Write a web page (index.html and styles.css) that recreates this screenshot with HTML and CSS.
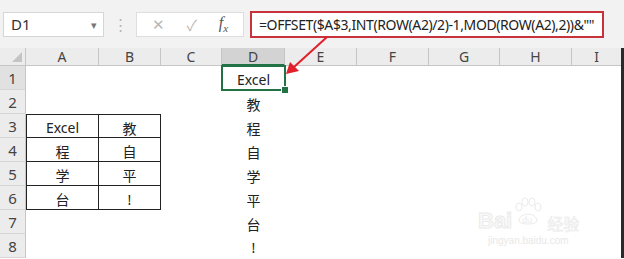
FILE: index.html
```html
<!DOCTYPE html>
<html lang="zh-CN">
<head>
  <meta charset="UTF-8">
  <title>Excel</title>
  <link rel="stylesheet" href="styles.css">
</head>
<body>
  <div class="window">
    <div class="toolbar">
      <div class="namebox">
        <span>D1</span>
        <span class="drop">▾</span>
      </div>
      <div class="dots">⋮</div>
      <div class="controls">
        <span class="ctl cancel">✕</span>
        <span class="ctl ok">✓</span>
        <span class="ctl fx">f<sub>x</sub></span>
      </div>
      <div class="formula">=OFFSET($A$3,INT(ROW(A2)/2)-1,MOD(ROW(A2),2))&amp;""</div>
    </div>

    <div class="sheet">
      <div class="corner"></div>
      <div class="colhead">A</div>
      <div class="colhead">B</div>
      <div class="colhead">C</div>
      <div class="colhead active">D</div>
      <div class="colhead">E</div>
      <div class="colhead">F</div>
      <div class="colhead">G</div>
      <div class="colhead">H</div>
      <div class="colhead last">I</div>

      <div class="rowhead active">1</div>
      <div class="cell"></div><div class="cell"></div><div class="cell"></div>
      <div class="cell selected">Excel</div>
      <div class="cell"></div><div class="cell"></div><div class="cell"></div><div class="cell"></div><div class="cell"></div>

      <div class="rowhead">2</div>
      <div class="cell"></div><div class="cell"></div><div class="cell"></div>
      <div class="cell">教</div>
      <div class="cell"></div><div class="cell"></div><div class="cell"></div><div class="cell"></div><div class="cell"></div>

      <div class="rowhead">3</div>
      <div class="cell tb top left">Excel</div><div class="cell tb top">教</div><div class="cell"></div>
      <div class="cell">程</div>
      <div class="cell"></div><div class="cell"></div><div class="cell"></div><div class="cell"></div><div class="cell"></div>

      <div class="rowhead">4</div>
      <div class="cell tb left">程</div><div class="cell tb">自</div><div class="cell"></div>
      <div class="cell">自</div>
      <div class="cell"></div><div class="cell"></div><div class="cell"></div><div class="cell"></div><div class="cell"></div>

      <div class="rowhead">5</div>
      <div class="cell tb left">学</div><div class="cell tb">平</div><div class="cell"></div>
      <div class="cell">学</div>
      <div class="cell"></div><div class="cell"></div><div class="cell"></div><div class="cell"></div><div class="cell"></div>

      <div class="rowhead">6</div>
      <div class="cell tb left">台</div><div class="cell tb">!</div><div class="cell"></div>
      <div class="cell">平</div>
      <div class="cell"></div><div class="cell"></div><div class="cell"></div><div class="cell"></div><div class="cell"></div>

      <div class="rowhead">7</div>
      <div class="cell"></div><div class="cell"></div><div class="cell"></div>
      <div class="cell">台</div>
      <div class="cell"></div><div class="cell"></div><div class="cell"></div><div class="cell"></div><div class="cell"></div>

      <div class="rowhead">8</div>
      <div class="cell"></div><div class="cell"></div><div class="cell"></div>
      <div class="cell">!</div>
      <div class="cell"></div><div class="cell"></div><div class="cell"></div><div class="cell"></div><div class="cell"></div>
    </div>

    <!-- red callout arrow -->
    <svg class="arrow" width="624" height="259" viewBox="0 0 624 259">
      <line x1="327" y1="37" x2="294" y2="67" stroke="#e0202a" stroke-width="2"/>
      <polygon points="286,74 290,62 299,71" fill="#e0202a"/>
    </svg>

    <div class="watermark">
      <div class="wm-top">
        <span class="wm-bai">Bai</span>
        <span class="wm-paw">
          <svg width="30" height="30" viewBox="0 0 30 30">
            <g fill="none" stroke="#ebebeb" stroke-width="1">
              <ellipse cx="6" cy="10" rx="3" ry="4"/>
              <ellipse cx="12" cy="5" rx="3" ry="4"/>
              <ellipse cx="19" cy="5" rx="3" ry="4"/>
              <ellipse cx="25" cy="10" rx="3" ry="4"/>
              <path d="M6 24 C6 15 24 15 24 24 C24 28 6 28 6 24 Z"/>
            </g>
            <text x="9" y="26" font-size="9" fill="#ebebeb" font-family="Liberation Sans, sans-serif">du</text>
          </svg>
        </span>
        <span class="wm-jy">经验</span>
      </div>
      <div class="wm-url">jingyan.baidu.com</div>
    </div>
  </div>
</body>
</html>
```

FILE: styles.css
```css
* {
  box-sizing: border-box;
}
body {
  margin: 0;
  width: 624px;
  height: 259px;
  overflow: hidden;
  background: #ffffff;
  font-family: "Noto Sans", "Noto Sans CJK SC", sans-serif;
}
.window {
  position: relative;
  width: 624px;
  height: 259px;
}
.toolbar {
  height: 48px;
  background: #f2f2f2;
  display: flex;
  align-items: center;
  padding: 0 20px 0 3px;
}
.namebox {
  width: 101px;
  height: 25px;
  background: #fff;
  border: 1px solid #d6d6d6;
  display: flex;
  align-items: center;
  justify-content: space-between;
  padding: 0 6px 0 7px;
  font-size: 15px;
  color: #333;
}
.drop {
  font-size: 11px;
  color: #777;
}
.dots {
  width: 32px;
  text-align: center;
  color: #b5b5b5;
  font-size: 15px;
}
.controls {
  width: 108px;
  height: 25px;
  background: #fff;
  border: 1px solid #dedede;
  display: flex;
  align-items: center;
  justify-content: space-around;
  padding: 0 4px;
}
.ctl {
  color: #b8b8b8;
  font-size: 15px;
}
.fx {
  font-family: "Liberation Serif", serif;
  font-style: italic;
  color: #555;
  font-size: 16px;
}
.fx sub {
  font-size: 11px;
}
.formula {
  margin-left: 6px;
  width: 354px;
  height: 27px;
  background: #fff;
  border: 2px solid #c8323b;
  display: flex;
  align-items: center;
  padding-left: 7px;
  font-size: 14px;
  letter-spacing: -0.4px;
  color: #222;
  white-space: nowrap;
  overflow: hidden;
}
.sheet {
  display: grid;
  grid-template-columns: 26px 73px 62px 61px 63px 72px 72px 71px 72px 1fr;
  grid-template-rows: 18px repeat(8, 24px);
  border-right: 3px solid #2a2a2a;
}
.corner {
  background: #ececec;
  border-right: 1px solid #c6c6c6;
  border-bottom: 1px solid #c6c6c6;
  position: relative;
}
.corner::after {
  content: "";
  position: absolute;
  right: 3px;
  bottom: 3px;
  border-left: 10px solid transparent;
  border-bottom: 10px solid #c4c4c4;
}
.colhead {
  background: #ececec;
  border-right: 1px solid #c6c6c6;
  border-bottom: 1px solid #c6c6c6;
  display: flex;
  align-items: center;
  justify-content: center;
  font-size: 14px;
  color: #444;
}
.colhead.active {
  background: #d3d3d3;
  border-bottom: 2px solid #217346;
}
.colhead.last {
  border-right: none;
}
.rowhead {
  background: #ececec;
  border-right: 1px solid #c6c6c6;
  border-bottom: 1px solid #d6d6d6;
  display: flex;
  align-items: flex-end;
  justify-content: center;
  padding-bottom: 1px;
  font-size: 15px;
  color: #444;
}
.rowhead.active {
  background: #e1e1e1;
}
.cell {
  display: flex;
  align-items: center;
  justify-content: center;
  padding-top: 3px;
  font-size: 14px;
  color: #222;
  position: relative;
}
.tb {
  border-right: 1px solid #222;
  border-bottom: 1px solid #222;
}
.tb.top {
  border-top: 1px solid #222;
}
.tb.left {
  border-left: 1px solid #222;
}
.selected::after {
  content: "";
  position: absolute;
  left: -1px;
  top: -1px;
  right: -1px;
  bottom: -1px;
  border: 2px solid #217346;
}
.selected::before {
  content: "";
  position: absolute;
  right: -4px;
  bottom: -4px;
  width: 6px;
  height: 6px;
  background: #217346;
  border: 1px solid #fff;
  z-index: 2;
}
.arrow {
  position: absolute;
  left: 0;
  top: 0;
  pointer-events: none;
}
.watermark {
  position: absolute;
  left: 478px;
  top: 202px;
  color: #f4f4f4;
}
.wm-top {
  display: flex;
  align-items: flex-end;
  height: 30px;
}
.wm-bai {
  font-family: "Liberation Sans", sans-serif;
  font-size: 22px;
  font-weight: bold;
  color: #f9f9f9;
  -webkit-text-stroke: 1px #ebebeb;
  line-height: 1;
}
.wm-paw {
  margin-left: 1px;
}
.wm-jy {
  font-size: 16px;
  color: #f9f9f9;
  -webkit-text-stroke: 0.6px #ebebeb;
  margin-left: 4px;
  line-height: 1;
}
.wm-url {
  font-family: "Liberation Sans", sans-serif;
  font-size: 10px;
  color: #e8e8e8;
  margin-top: 3px;
  margin-left: 10px;
}
```
